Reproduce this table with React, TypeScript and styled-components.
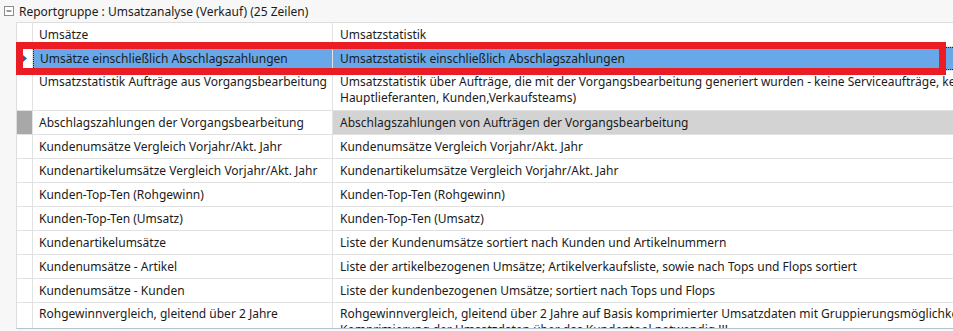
import styled, { createGlobalStyle } from "styled-components";

const GlobalStyle = createGlobalStyle`
  body {
    margin: 0;
    background: #f7f7f7;
  }
`;

const Page = styled.div`
  position: relative;
  width: 953px;
  height: 331px;
  overflow: hidden;
  background: #f7f7f7;
  color: #1b1b1b;
  font-family: "Noto Sans", "Open Sans", sans-serif;
  font-size: 12px;
`;

const GroupBar = styled.div`
  height: 22px;
  display: flex;
  align-items: center;
  gap: 5px;
  padding-left: 4px;
  white-space: nowrap;
`;

const Grid = styled.div`
  margin-left: 16px;
  height: 305px;
  border-top: 1px solid #dedede;
  border-left: 1px solid #dedede;
  border-bottom: 1px solid #b8c2cc;
  background: #ffffff;
  overflow: hidden;
`;

const Row = styled.div<{ $tall?: boolean }>`
  display: grid;
  grid-template-columns: 16px 300px 1400px;
  height: ${(p) => (p.$tall ? 39 : 23)}px;
  border-bottom: 1px solid #e2e2e2;
`;

const Indicator = styled.div<{ $marked?: boolean }>`
  display: flex;
  align-items: center;
  justify-content: center;
  background: ${(p) => (p.$marked ? "#a8a8a8" : "#ffffff")};
  border-right: 1px solid #e2e2e2;
`;

const Cell = styled.div<{
  $tall?: boolean;
  $selected?: boolean;
  $shade?: boolean;
  $first?: boolean;
}>`
  box-sizing: border-box;
  display: flex;
  flex-direction: column;
  justify-content: ${(p) => (p.$tall ? "flex-start" : "center")};
  padding: ${(p) => (p.$tall ? "3px" : "0")} 6px 0 ${(p) => (p.$first ? 6 : 7)}px;
  line-height: 16px;
  white-space: nowrap;
  overflow: hidden;
  background: ${(p) =>
    p.$selected ? "#68a8e8" : p.$shade ? "#d3d3d3" : "transparent"};
  border-right: ${(p) => (p.$first ? "1px solid #e2e2e2" : "none")};
  border-top: ${(p) => (p.$selected ? "1px dotted #222" : "none")};
  border-bottom: ${(p) => (p.$selected ? "1px dotted #222" : "none")};
  border-left: ${(p) =>
    p.$selected && p.$first ? "1px dotted #222" : "none"};
`;

const Marker = styled.div`
  position: absolute;
  left: 16px;
  top: 42px;
  width: 930px;
  height: 33px;
  box-sizing: border-box;
  border: 7px solid #ec1c24;
  pointer-events: none;
`;

type Item = {
  name: string;
  desc: string[];
  selected?: boolean;
  marked?: boolean;
};

const items: Item[] = [
  {
    name: "Umsätze einschließlich Abschlagszahlungen",
    desc: ["Umsatzstatistik einschließlich Abschlagszahlungen"],
    selected: true,
  },
  {
    name: "Umsatzstatistik Aufträge aus Vorgangsbearbeitung",
    desc: [
      "Umsatzstatistik über Aufträge, die mit der Vorgangsbearbeitung generiert wurden - keine Serviceaufträge, keine Kassenvorgänge (Auswertung nach",
      "Hauptlieferanten, Kunden,Verkaufsteams)",
    ],
  },
  {
    name: "Abschlagszahlungen der Vorgangsbearbeitung",
    desc: ["Abschlagszahlungen von Aufträgen der Vorgangsbearbeitung"],
    marked: true,
  },
  {
    name: "Kundenumsätze Vergleich Vorjahr/Akt. Jahr",
    desc: ["Kundenumsätze Vergleich Vorjahr/Akt. Jahr"],
  },
  {
    name: "Kundenartikelumsätze Vergleich Vorjahr/Akt. Jahr",
    desc: ["Kundenartikelumsätze Vergleich Vorjahr/Akt. Jahr"],
  },
  { name: "Kunden-Top-Ten (Rohgewinn)", desc: ["Kunden-Top-Ten (Rohgewinn)"] },
  { name: "Kunden-Top-Ten (Umsatz)", desc: ["Kunden-Top-Ten (Umsatz)"] },
  {
    name: "Kundenartikelumsätze",
    desc: ["Liste der Kundenumsätze sortiert nach Kunden und Artikelnummern"],
  },
  {
    name: "Kundenumsätze - Artikel",
    desc: [
      "Liste der artikelbezogenen Umsätze; Artikelverkaufsliste, sowie nach Tops und Flops sortiert",
    ],
  },
  {
    name: "Kundenumsätze - Kunden",
    desc: ["Liste der kundenbezogenen Umsätze; sortiert nach Tops und Flops"],
  },
  {
    name: "Rohgewinnvergleich, gleitend über 2 Jahre",
    desc: [
      "Rohgewinnvergleich, gleitend über 2 Jahre auf Basis komprimierter Umsatzdaten mit Gruppierungsmöglichkeiten nach Kunden und Artikeln. Vorher ist eine",
      "Komprimierung der Umsatzdaten über das Kundentool notwendig !!!",
    ],
  },
];

const CollapseIcon = () => (
  <svg width="10" height="10" viewBox="0 0 10 10">
    <rect x="0.5" y="0.5" width="9" height="9" fill="#fff" stroke="#8c8c8c" />
    <path d="M2.5 5h5" stroke="#3c3c3c" strokeWidth="1" />
  </svg>
);

const RowArrow = () => (
  <svg width="4" height="7" viewBox="0 0 4 7">
    <path d="M0 0l4 3.5L0 7z" fill="#2a5fa8" />
  </svg>
);

const App = () => {
  return (
    <Page>
      <GlobalStyle />
      <GroupBar>
        <CollapseIcon />
        <span>Reportgruppe : Umsatzanalyse (Verkauf) (25 Zeilen)</span>
      </GroupBar>
      <Grid>
        <Row>
          <Indicator />
          <Cell $first>Umsätze</Cell>
          <Cell>Umsatzstatistik</Cell>
        </Row>
        {items.map((item) => {
          const tall = item.desc.length > 1;
          return (
            <Row key={item.name} $tall={tall}>
              <Indicator $marked={item.marked}>
                {item.selected && <RowArrow />}
              </Indicator>
              <Cell $first $tall={tall} $selected={item.selected}>
                {item.name}
              </Cell>
              <Cell $tall={tall} $selected={item.selected} $shade={item.marked}>
                {item.desc.map((line) => (
                  <span key={line}>{line}</span>
                ))}
              </Cell>
            </Row>
          );
        })}
      </Grid>
      <Marker />
    </Page>
  );
};

export default App;
